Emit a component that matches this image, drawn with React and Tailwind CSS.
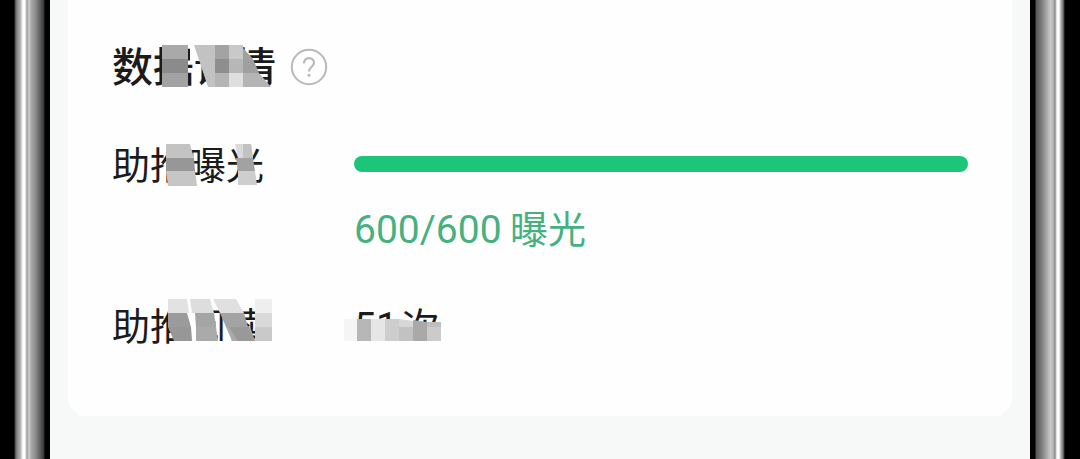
import React from "react";

const tiles = {
  title: [
    ["50,2 76,2 76,16 50,16", "#a9a9a9"],
    ["50,16 76,16 76,30 50,30", "#8b8b8b"],
    ["50,30 76,30 76,44 50,44", "#a2a2a2"],
    ["78,0 82,0 88,18 78,18", "#fefefe"],
    ["82,2 103,2 103,44 96,44", "#c2c2c2"],
    ["103,2 117,2 117,16 103,16", "#a3a3a3"],
    ["103,16 117,16 117,30 103,30", "#8e8e8e"],
    ["103,30 117,30 117,44 103,44", "#b4b4b4"],
    ["117,2 131,2 131,16 117,16", "#c9c9c9"],
    ["117,16 131,16 131,30 117,30", "#b7b7b7"],
    ["117,30 131,30 131,44 117,44", "#dedede"],
    ["131,5 141,16 147,30 131,30", "#a0a0a0"],
    ["131,30 147,30 159,44 131,44", "#b4b4b4"],
  ],
  exposure: [
    ["54,2 78,2 82,16 54,16", "#c3c3c3"],
    ["54,16 82,16 83,29 54,29", "#979797"],
    ["54,29 83,29 85,44 56,44", "#c6c6c6"],
    ["123,2 139,2 141,16 126,16", "#dadada"],
    ["131,2 139,2 141,16 131,16", "#c2c2c2"],
    ["124,16 141,16 143,29 126,29", "#a2a2a2"],
    ["126,29 143,29 145,43 126,43", "#cecece"],
  ],
  reads: [
    ["62,38 160,38 160,46 62,46", "#fefefe"],
    ["56,-4 75,-4 79,10 56,10", "#e2e2e2"],
    ["56,10 75,10 79,24 56,24", "#9b9b9b"],
    ["56,24 79,24 80,38 62,38", "#979797"],
    ["75,-4 80,-4 84,10 84,38 80,38 79,24", "#fefefe"],
    ["78,-4 98,-4 102,10 80,10", "#dddddd"],
    ["83,10 102,10 104,24 84,24", "#a5a5a5"],
    ["84,24 104,24 106,38 84,38", "#aaaaaa"],
    ["101,-4 124,-4 132,10 108,10", "#e0e0e0"],
    ["108,10 132,10 136,24 114,24", "#a3a3a3"],
    ["114,24 138,24 143,38 120,38", "#aaaaaa"],
    ["117,24 136,24 143,38 126,38", "#999999"],
    ["143,-4 160,-4 160,10 143,10", "#eeeeee"],
    ["143,10 160,10 160,24 143,24", "#d9d9d9"],
    ["143,24 160,24 160,38 143,38", "#c9c9c9"],
  ],
  count: [
    ["-10,38 95,38 95,46 -10,46", "#fefefe"],
    ["-10,16 3,16 3,38 -10,38", "#f5f5f5"],
    ["3,16 17,16 17,38 3,38", "#b7b7b7"],
    ["17,16 31,16 31,38 17,38", "#e6e6e6"],
    ["31,16 45,16 45,38 31,38", "#cdcdcd"],
    ["45,16 59,18 59,24 45,24", "#d7d7d7"],
    ["45,24 59,24 59,38 45,38", "#c2c2c2"],
    ["59,17 73,19 73,38 59,38", "#a9a9a9"],
    ["73,19 87,19 87,24 73,24", "#bfbfbf"],
    ["73,24 87,24 87,38 73,38", "#cbcbcb"],
  ],
};

function Censored({ as: Tag = "span", id, className = "", children }) {
  return (
    <Tag className={`relative block w-fit whitespace-nowrap ${className}`}>
      {children}
      <svg
        aria-hidden="true"
        className="pointer-events-none absolute left-0 top-0 h-12 w-40 overflow-visible"
        viewBox="0 -3 160 48"
      >
        {tiles[id].map(([points, fill]) => (
          <polygon key={points} points={points} fill={fill} />
        ))}
      </svg>
    </Tag>
  );
}

function Digits({ children }) {
  return <span className="font-[Roboto,sans-serif] text-[39px] leading-8">{children}</span>;
}

export default function App() {
  return (
    <div className="flex min-h-screen bg-black font-['Noto_Sans_CJK_SC',sans-serif] text-[38px] leading-[48px] text-[#1b1b1b]">
      <div className="w-[50px] shrink-0 bg-[linear-gradient(90deg,#000_0_14px,#444_15px,#888_17px,#aaa_20px,#fff_23px,#fff_25px,#999_27px,#d0d0d0_29px,#aaa_31px,#888_36px,#555_41px,#333_44px,#000_45px,#000_50px)]" />
      <main className="min-w-0 flex-1 bg-[#f6f9f8] px-[18px]">
        <section className="rounded-b-[18px] bg-[#fefefe] px-11 pb-[68px] pt-10">
          <header className="flex items-center gap-3.5">
            <Censored as="h1" id="title" className="pb-1.5 text-[41px] font-medium">
              数据详情
            </Censored>
            <button type="button" aria-label="说明" className="text-[#b8b8b8]">
              <svg className="size-[38px]" viewBox="0 0 38 38" fill="none" stroke="currentColor" strokeWidth="2">
                <circle cx="19" cy="19" r="17.2" />
                <path d="M14 15.5c0-3.3 2-5.3 5-5.3s5 1.900 5 4.600c0 4.200-5 4.200-5 8.700" strokeWidth="2.200" />
                <circle cx="19" cy="27.200" r="1.500" fill="currentColor" stroke="none" />
              </svg>
            </button>
          </header>

          <dl>
            <div className="mt-[45px] flex">
              <dt className="w-[242px] shrink-0">
                <Censored id="exposure">助推曝光</Censored>
              </dt>
              <dd className="min-w-0 flex-1 pt-[17px]">
                <div
                  role="progressbar"
                  aria-label="助推曝光"
                  aria-valuemin={0}
                  aria-valuemax={600}
                  aria-valuenow={600}
                  className="h-4 rounded-full bg-[#1dc578]"
                />
                <p className="mt-[31px] text-[#46b17f]">
                  <Digits>600/600</Digits> 曝光
                </p>
              </dd>
            </div>
            <div className="mt-[49px] flex">
              <dt className="w-[242px] shrink-0">
                <Censored id="reads">助推阅读</Censored>
              </dt>
              <dd>
                <Censored id="count">
                  <Digits>51</Digits>
                  <span className="ml-1">次</span>
                </Censored>
              </dd>
            </div>
          </dl>
        </section>
      </main>
      <div className="w-[50px] shrink-0 bg-[linear-gradient(90deg,#000_0_5px,#555_6px,#777_11px,#aaa_17px,#c8c8c8_20px,#bbb_23px,#888_25px,#fff_27px,#fff_29px,#aaa_31px,#777_33px,#000_35px,#000_50px)]" />
    </div>
  );
}
